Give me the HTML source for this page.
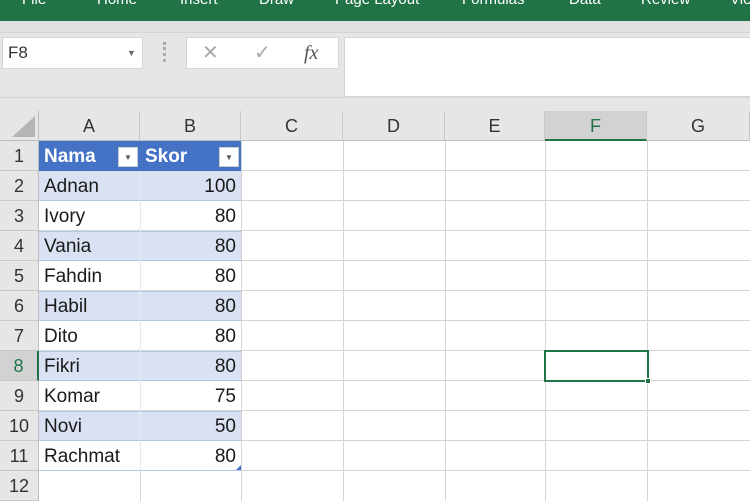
<!DOCTYPE html>
<html><head><style>
*{margin:0;padding:0;box-sizing:border-box}
body{width:750px;height:500px;overflow:hidden;background:#e6e6e6;font-family:"Liberation Sans",sans-serif;position:relative}
.a{position:absolute}
.green{left:0;top:0;width:750px;height:21px;background:#217346}
.green span{position:absolute;top:-9px;color:#fff;font-size:15px}
.g2{left:0;top:21px;width:750px;height:12px;background:#e1e1e1;border-bottom:1px solid #d4d4d4}
.box{background:#fff;border:1px solid #d6d6d6}
.hdr{top:111px;height:30px;background:#e6e6e6;border-right:1px solid #c8c8c8;border-bottom:1px solid #bdbdbd;color:#333;font-size:18px;text-align:center;line-height:30px}
.rh{left:0;width:39px;height:30px;background:#e6e6e6;border-bottom:1px solid #c8c8c8;border-right:1px solid #bdbdbd;color:#333;font-size:18px;text-align:center;line-height:30px}
.grid{left:39px;top:141px;width:711px;height:360px;background:#fff}
.vl{top:141px;width:1px;height:360px;background:#d4d4d4}
.hl{left:39px;width:711px;height:1px;background:#d4d4d4}
.c{height:30px;font-size:19px;line-height:31px;color:#1a1a1a;padding:0 5px}
</style></head><body>
<div class="a green">
<span style="left:22px">File</span><span style="left:97px">Home</span><span style="left:180px">Insert</span><span style="left:259px">Draw</span><span style="left:335px">Page Layout</span><span style="left:462px">Formulas</span><span style="left:569px">Data</span><span style="left:641px">Review</span><span style="left:730px">View</span>
</div>
<div class="a g2"></div>
<div class="a box" style="left:2px;top:37px;width:141px;height:32px;font-size:17px;line-height:30px;padding-left:5px;color:#333">F8<span style="position:absolute;left:124px;top:0;font-size:9px;color:#666">▼</span></div>
<div class="a" style="left:163px;top:42px;width:3px;height:20px;border-left:3px dotted #aaa"></div>
<div class="a box" style="left:186px;top:37px;width:153px;height:32px;color:#aaa;font-size:20px;line-height:30px">
<span style="position:absolute;left:15px">✕</span><span style="position:absolute;left:67px">✓</span><span style="position:absolute;left:117px;color:#555;font-style:italic;font-family:'Liberation Serif',serif">fx</span></div>
<div class="a box" style="left:344px;top:37px;width:410px;height:60px"></div>
<div class="a" style="left:0;top:97px;width:750px;height:1px;background:#d4d4d4"></div>
<div class="a" style="left:0;top:111px;width:39px;height:30px;background:#e6e6e6;border-right:1px solid #bdbdbd;border-bottom:1px solid #bdbdbd"></div>
<div class="a" style="left:12px;top:116px;width:0;height:0;border-left:23px solid transparent;border-bottom:21px solid #b5b5b5"></div>
<div class="a hdr" style="left:39px;width:101px">A</div>
<div class="a hdr" style="left:140px;width:101px">B</div>
<div class="a hdr" style="left:241px;width:102px">C</div>
<div class="a hdr" style="left:343px;width:102px">D</div>
<div class="a hdr" style="left:445px;width:100px">E</div>
<div class="a hdr" style="left:545px;width:102px;background:#d2d2d2;border-bottom:2px solid #217346;color:#217346">F</div>
<div class="a hdr" style="left:647px;width:103px">G</div>
<div class="a grid"></div>
<div class="a vl" style="left:140px"></div><div class="a vl" style="left:241px"></div><div class="a vl" style="left:343px"></div><div class="a vl" style="left:445px"></div><div class="a vl" style="left:545px"></div><div class="a vl" style="left:647px"></div>
<div class="a hl" style="top:170px"></div><div class="a hl" style="top:200px"></div><div class="a hl" style="top:230px"></div><div class="a hl" style="top:260px"></div><div class="a hl" style="top:290px"></div><div class="a hl" style="top:320px"></div><div class="a hl" style="top:350px"></div><div class="a hl" style="top:380px"></div><div class="a hl" style="top:410px"></div><div class="a hl" style="top:440px"></div><div class="a hl" style="top:470px"></div>
<div class="a rh" style="top:141px">1</div><div class="a rh" style="top:171px">2</div><div class="a rh" style="top:201px">3</div><div class="a rh" style="top:231px">4</div><div class="a rh" style="top:261px">5</div><div class="a rh" style="top:291px">6</div><div class="a rh" style="top:321px">7</div><div class="a rh" style="top:351px;background:#d2d2d2;color:#217346;border-right:2px solid #217346">8</div><div class="a rh" style="top:381px">9</div><div class="a rh" style="top:411px">10</div><div class="a rh" style="top:441px">11</div><div class="a rh" style="top:471px">12</div>
<div class="a" style="left:39px;top:141px;width:202px;height:30px;background:#4472c4"></div>
<div class="a c" style="left:39px;top:141px;color:#fff;font-weight:bold">Nama</div>
<div class="a c" style="left:140px;top:141px;color:#fff;font-weight:bold">Skor</div>
<div class="a" style="left:118px;top:147px;width:20px;height:20px;background:#fff;border:1px solid #ccc;font-size:8px;text-align:center;line-height:19px;color:#555">▼</div>
<div class="a" style="left:219px;top:147px;width:20px;height:20px;background:#fff;border:1px solid #ccc;font-size:8px;text-align:center;line-height:19px;color:#555">▼</div>
<div class="a" style="left:39px;top:171px;width:202px;height:30px;background:#d9e1f2;border-bottom:1px solid #b4c6e7"></div>
<div class="a" style="left:39px;top:231px;width:202px;height:30px;background:#d9e1f2;border-top:1px solid #b4c6e7;border-bottom:1px solid #b4c6e7"></div>
<div class="a" style="left:39px;top:291px;width:202px;height:30px;background:#d9e1f2;border-top:1px solid #b4c6e7;border-bottom:1px solid #b4c6e7"></div>
<div class="a" style="left:39px;top:351px;width:202px;height:30px;background:#d9e1f2;border-top:1px solid #b4c6e7;border-bottom:1px solid #b4c6e7"></div>
<div class="a" style="left:39px;top:411px;width:202px;height:30px;background:#d9e1f2;border-top:1px solid #b4c6e7;border-bottom:1px solid #b4c6e7"></div>
<div class="a" style="left:39px;top:470px;width:202px;height:1px;background:#b4c6e7"></div>
<div class="a" style="left:140px;top:171px;width:1px;height:300px;background:#e4e9f5"></div>
<div class="a c" style="left:39px;top:171px">Adnan</div><div class="a c" style="left:140px;top:171px;width:101px;text-align:right">100</div>
<div class="a c" style="left:39px;top:201px">Ivory</div><div class="a c" style="left:140px;top:201px;width:101px;text-align:right">80</div>
<div class="a c" style="left:39px;top:231px">Vania</div><div class="a c" style="left:140px;top:231px;width:101px;text-align:right">80</div>
<div class="a c" style="left:39px;top:261px">Fahdin</div><div class="a c" style="left:140px;top:261px;width:101px;text-align:right">80</div>
<div class="a c" style="left:39px;top:291px">Habil</div><div class="a c" style="left:140px;top:291px;width:101px;text-align:right">80</div>
<div class="a c" style="left:39px;top:321px">Dito</div><div class="a c" style="left:140px;top:321px;width:101px;text-align:right">80</div>
<div class="a c" style="left:39px;top:351px">Fikri</div><div class="a c" style="left:140px;top:351px;width:101px;text-align:right">80</div>
<div class="a c" style="left:39px;top:381px">Komar</div><div class="a c" style="left:140px;top:381px;width:101px;text-align:right">75</div>
<div class="a c" style="left:39px;top:411px">Novi</div><div class="a c" style="left:140px;top:411px;width:101px;text-align:right">50</div>
<div class="a c" style="left:39px;top:441px">Rachmat</div><div class="a c" style="left:140px;top:441px;width:101px;text-align:right">80</div>
<div class="a" style="left:236px;top:465px;width:0;height:0;border-left:5px solid transparent;border-bottom:5px solid #4472c4"></div>
<div class="a" style="left:544px;top:350px;width:105px;height:32px;border:2px solid #217346"></div>
<div class="a" style="left:645px;top:378px;width:6px;height:6px;background:#217346;border:1px solid #fff"></div>
</body></html>
